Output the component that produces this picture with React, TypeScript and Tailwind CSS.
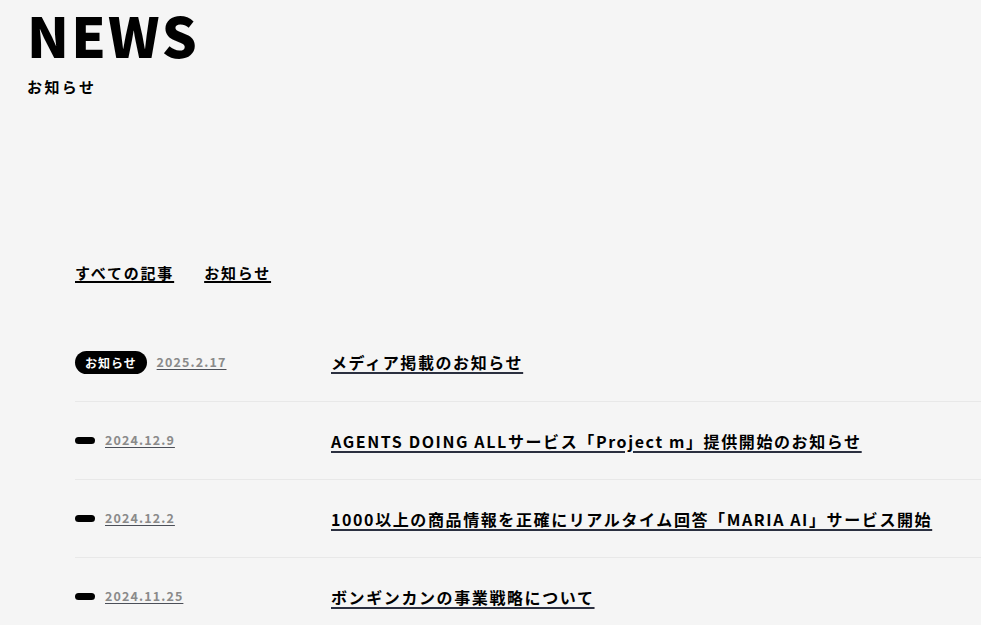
const font = { fontFamily: '"Noto Sans CJK JP", "Noto Sans", sans-serif' }

type NewsItem = {
  date: string
  title: string
  category?: string
}

const newsData: NewsItem[] = [
  { date: '2025.2.17', title: 'メディア掲載のお知らせ', category: 'お知らせ' },
  { date: '2024.12.9', title: 'AGENTS DOING ALLサービス「Project m」提供開始のお知らせ' },
  { date: '2024.12.2', title: '1000以上の商品情報を正確にリアルタイム回答「MARIA AI」サービス開始' },
  { date: '2024.11.25', title: 'ボンギンカンの事業戦略について' },
]

export default function App() {
  return (
    <div className="min-h-screen bg-[#f5f5f5] text-black overflow-hidden" style={font}>
      <header className="pl-[27px]">
        <h1 className="text-[55px] leading-[68px] font-black tracking-[0.04em]">NEWS</h1>
        <p className="mt-[8px] text-[15px] leading-[22px] font-bold tracking-[0.16em]">お知らせ</p>
      </header>

      <section className="pl-[75px] pt-[163px]">
        <ul className="flex gap-[30px] text-[15px] leading-[24px] font-bold tracking-[0.12em]">
          <li className="underline underline-offset-[2px] decoration-[1.5px]">すべての記事</li>
          <li className="underline underline-offset-[2px] decoration-[1.5px]">お知らせ</li>
        </ul>

        <ul className="mt-[38px]">
          {newsData.map((item, i) => (
            <li
              key={i}
              className={`flex items-center h-[78px] ${i > 0 ? 'border-t border-[#e8e8e8]' : ''}`}
            >
              <div className="w-[256px] flex items-center gap-[10px] shrink-0">
                {item.category ? (
                  <span className="h-[23px] px-[10px] rounded-full bg-black text-white text-[12px] leading-[23px] font-bold tracking-[0.08em]">
                    {item.category}
                  </span>
                ) : (
                  <span className="w-[20px] h-[7px] rounded-full bg-black" />
                )}
                <span className="text-[12.5px] font-bold tracking-[0.09em] text-[#8a8a8a] underline underline-offset-[2px] decoration-[#4b4f58]">
                  {item.date}
                </span>
              </div>
              <h2 className="text-[16px] leading-[24px] font-bold tracking-[0.1em] whitespace-nowrap underline underline-offset-[3px] decoration-[1.5px] decoration-[#2b3040]">
                {item.title}
              </h2>
            </li>
          ))}
        </ul>
      </section>
    </div>
  )
}
